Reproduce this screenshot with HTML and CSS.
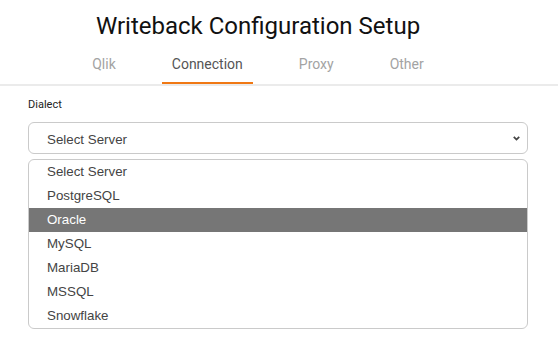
FILE: index.html
```html
<!DOCTYPE html>
<html>
<head>
<meta charset="utf-8">
<link rel="stylesheet" href="styles.css">
</head>
<body>
<div class="header">
  <h1 class="title">Writeback Configuration Setup</h1>
</div>
<div class="tabbar">
  <div class="tabs">
    <div class="tab">Qlik</div>
    <div class="tab active">Connection</div>
    <div class="tab">Proxy</div>
    <div class="tab">Other</div>
  </div>
</div>
<div class="form">
  <div class="label">Dialect</div>
  <div class="select">
    <span class="select-text">Select Server</span>
    <svg class="chevron" width="7" height="5" viewBox="0 0 7 5"><path d="M0.8 0.9 L3.5 3.6 L6.2 0.9" fill="none" stroke="#444" stroke-width="1.8"/></svg>
  </div>
  <div class="list">
    <div class="option">Select Server</div>
    <div class="option">PostgreSQL</div>
    <div class="option selected">Oracle</div>
    <div class="option">MySQL</div>
    <div class="option">MariaDB</div>
    <div class="option">MSSQL</div>
    <div class="option">Snowflake</div>
  </div>
</div>
</body>
</html>
```
FILE: styles.css
```css
html, body {
  margin: 0;
  padding: 0;
  background: #fff;
}
body {
  font-family: Roboto, "Liberation Sans", Arial, sans-serif;
}
.header {
  width: 516px;
  display: flex;
  justify-content: center;
}
.title {
  margin: 12px 0 0;
  font-size: 24px;
  font-weight: 400;
  line-height: 28px;
  color: #111;
}
.tabbar {
  border-bottom: 2px solid #ebebeb;
}
.tabs {
  width: 516px;
  display: flex;
  justify-content: center;
  gap: 36px;
}
.tab {
  padding: 16px 10px 10px;
  font-size: 14px;
  line-height: 16px;
  color: #a3a3a3;
  border-bottom: 2px solid transparent;
}
.tab.active {
  color: #555;
  border-bottom-color: #f07814;
}
.form {
  padding: 0 30px 0 28px;
}
.label {
  margin-top: 12px;
  font-size: 11px;
  line-height: 13px;
  color: #222;
}
.select {
  margin-top: 11px;
  height: 30px;
  border: 1px solid #cacaca;
  border-radius: 6px;
  display: flex;
  align-items: center;
  justify-content: space-between;
  padding: 0 7px 0 18px;
  font-family: "Liberation Sans", Arial, sans-serif;
  font-size: 13.33px;
  color: #444;
}
.select-text {
  position: relative;
  top: 1px;
}
.chevron {
  display: block;
}
.list {
  margin-top: 5px;
  border: 1px solid #cacaca;
  border-radius: 6px;
  overflow: hidden;
  font-family: "Liberation Sans", Arial, sans-serif;
  font-size: 13.33px;
  color: #444;
}
.option {
  height: 24px;
  line-height: 24px;
  padding-left: 18px;
}
.option.selected {
  background: #767676;
  color: #fff;
}
```
